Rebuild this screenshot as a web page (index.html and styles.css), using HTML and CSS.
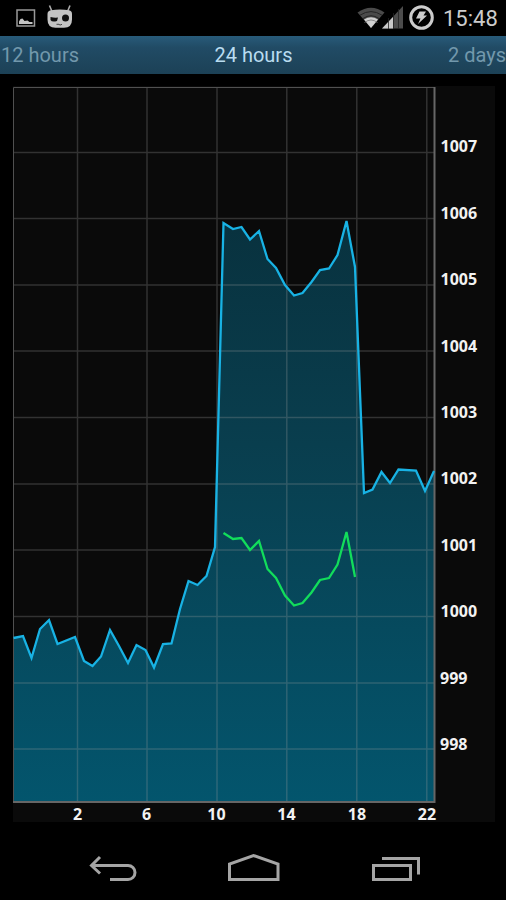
FILE: index.html
```html
<!doctype html>
<html lang="en">
    <head>
        <meta charset="utf-8">
        <meta name="viewport" content="width=device-width, initial-scale=1">
        <title>Barometer - 24 hours</title>
        <link rel="stylesheet" href="styles.css">
    </head>
    <body>
        <header class="status-bar">
            <svg class="status-left" width="80" height="36" viewBox="0 0 80 36">
                <rect x="17" y="10" width="17.500" height="16" fill="none" stroke="#999" stroke-width="1.500"/>
                <path d="M19 24v-2.500l1.500-2.500 2-.5 2 2.500 3-.5 2 1.500h3v2z" fill="#c4c4c4"/>
                <path d="M49.500 5.500l2.500 6M70 5.500l-2.500 6" stroke="#aaa" stroke-width="1.600"/>
                <path d="M47.500 14Q47.500 11 51 10.300 60 8.500 69 10.300 72 11 72 14V19.500Q72 27.800 64 27.800H55.500Q47.500 27.800 47.500 19.500z" fill="#c4c4c4"/>
                <path d="M50.500 17q4 1 7.500 .5l-1 3.500q-5 1.500-6.500-1z" fill="#111"/>
                <circle cx="65.500" cy="18" r="3.500" fill="#111"/>
                <path d="M56.500 24.300h2.500l1 .8 2-.8" fill="none" stroke="#444"/>
            </svg>
            <svg class="status-right" width="78" height="36" viewBox="356 0 78 36">
                <path d="M357.500 12.500Q371 3 384.500 12.500L371 28z" fill="#4a4a4a"/>
                <path d="M360 15.200Q371 8 382 15.200M363 18.500Q371 13 379 18.500" fill="none" stroke="#242424"/>
                <path d="M364 19.500Q371 15 378 19.500L371 28z" fill="#d0d0d0"/>
                <path d="M364.500 22.500Q371 17.500 377.500 22.500" fill="none" stroke="#777" stroke-width=".8"/>
                <path d="M382 28.500L403 6v22.500z" fill="#4c4c4c"/>
                <path d="M382 28.500l11-11.500v11.500z" fill="#c8c8c8"/>
                <path d="M388.500 18v11M393.500 13v16M398.500 9v20" stroke="#222" stroke-width=".8"/>
                <circle cx="421.500" cy="17.500" r="10.800" fill="none" stroke="#ccc" stroke-width="3"/>
                <path d="M419.500 11.500h6.500l-2.500 4h3.500l-9 8.500 2.500-5.500H416z" fill="#ccc"/>
            </svg>
            <span class="clock">15:48</span>
        </header>

        <nav class="periods">
            <span class="period">12 hours</span>
            <span class="period active">24 hours</span>
            <span class="period last">2 days</span>
        </nav>

        <main class="chart">
            <svg width="482" height="736" viewBox="13 86 482 736">
                <defs>
                    <linearGradient id="area" gradientUnits="userSpaceOnUse" x1="0" y1="86" x2="0" y2="802">
                        <stop offset="0" stop-color="#082a35"/>
                        <stop offset="0.500" stop-color="#093e4e"/>
                        <stop offset="1" stop-color="#03556d"/>
                    </linearGradient>
                </defs>
                <path class="fill" d="M13.500 638L23 636 31.500 658 40 629 49 620 57.500 644 75 637 84 661 92.500 666 101 656.500 110 630 119 646 128 663 136.500 645 145.500 650 154 667.500 163 644 171.500 643.500 180 609 188.500 581 197.500 585 206.500 576 215 547 223.500 223 233 229 241.500 227 250 239.500 259 231 267.500 259 276 268 285 285 294 295.500 302.500 293 311.500 282 320 270 329 268.500 337.500 255 346.500 221 355 267 364 493 372.500 489.500 381.500 472 390 483 398.500 469.500 416 470.500 425 491 434 471V802H13.500z"/>
                <path class="grid" d="M77.500 87V802M147 87V802M217 87V802M286.800 87V802M356.800 87V802M426.800 87V802M13 152.500H434M13 218.500H434M13 285H434M13 351H434M13 417.500H434M13 484H434M13 550H434M13 616.500H434M13 683H434M13 749H434"/>
                <path class="frame" d="M13.500 802V87.500H434"/>
                <path class="axis" d="M13 802H434.500V87"/>
                <polyline class="line pressure" points="13.500,638 23,636 31.500,658 40,629 49,620 57.500,644 75,637 84,661 92.500,666 101,656.500 110,630 119,646 128,663 136.500,645 145.500,650 154,667.500 163,644 171.500,643.500 180,609 188.500,581 197.500,585 206.500,576 215,547 223.500,223 233,229 241.500,227 250,239.500 259,231 267.500,259 276,268 285,285 294,295.500 302.500,293 311.500,282 320,270 329,268.500 337.500,255 346.500,221 355,267 364,493 372.500,489.500 381.500,472 390,483 398.500,469.500 416,470.500 425,491 434,471"/>
                <polyline class="line trend" points="223.500,533 233,539 241.500,538 250,550 259,541 267.500,569 276,578 285,595.500 294,605.500 302.500,603 311.500,592.500 320,580 329,578 337.500,564.500 346.500,532 355,577"/>
                <g class="labels">
                    <text x="440.500" y="152">1007</text>
                    <text x="440.500" y="219">1006</text>
                    <text x="440.500" y="285">1005</text>
                    <text x="440.500" y="352">1004</text>
                    <text x="440.500" y="418">1003</text>
                    <text x="440.500" y="484">1002</text>
                    <text x="440.500" y="551">1001</text>
                    <text x="440.500" y="617">1000</text>
                    <text x="440" y="684">999</text>
                    <text x="440" y="750">998</text>
                </g>
                <g class="labels hours">
                    <text x="77.500" y="820">2</text>
                    <text x="146.500" y="820">6</text>
                    <text x="216.500" y="820">10</text>
                    <text x="286.500" y="820">14</text>
                    <text x="357" y="820">18</text>
                    <text x="427" y="820">22</text>
                </g>
            </svg>
        </main>

        <footer class="nav-bar">
            <svg width="48" height="30" viewBox="89 853 48 30">
                <path d="M100 857l-8.500 8.500 8.500 8M92 865.500h36a7 7 0 0 1 0 14h-18"/>
            </svg>
            <svg width="54" height="30" viewBox="227 853 54 30">
                <path d="M229.500 879.500v-15.500l24-8.500 24.500 8.500v15.500z"/>
            </svg>
            <svg width="50" height="30" viewBox="371 853 50 30">
                <path d="M373.500 865.500h37v14h-37zM382 858.500h36.500v16"/>
            </svg>
        </footer>
    </body>
</html>
```
FILE: styles.css
```css
body {
    margin: 0;
    height: 900px;
    display: flex;
    flex-direction: column;
    overflow: hidden;
    background-color: #000;
    font-family: Roboto, sans-serif;
}

svg {
    display: block;
    overflow: visible;
}

.status-bar {
    height: 36px;
    display: flex;
    align-items: center;
}

.status-right {
    margin-left: auto;
}

.clock {
    width: 63px;
    margin-left: 9px;
    color: #ccc;
    font-size: 22px;
    line-height: 38px;
    padding-top: 2px;
    box-sizing: border-box;
}

.periods {
    height: 38px;
    box-sizing: border-box;
    padding-left: 1px;
    display: grid;
    grid-template-columns: 1fr 1fr 1fr;
    line-height: 39px;
    font-size: 20px;
    background: linear-gradient(#285b7a, #214b65 30%, #1c4156);
}

.period {
    color: #7298ac;
    white-space: nowrap;
}

.period.active {
    color: #b9dcf0;
    text-align: center;
}

.period.last {
    text-align: right;
}

.chart {
    width: 482px;
    height: 736px;
    margin: 12px 0 0 13px;
    background-color: #0a0a0a;
}

.fill {
    fill: url(#area);
}

.grid {
    fill: none;
    stroke: rgba(160, 160, 160, 0.27);
    stroke-width: 1.5;
}

.frame {
    fill: none;
    stroke: #505050;
}

.axis {
    fill: none;
    stroke: #666;
    stroke-width: 2;
}

.line {
    fill: none;
    stroke-width: 2.3;
}

.pressure {
    stroke: #18b2e4;
}

.trend {
    stroke: #12dc5b;
}

.labels {
    fill: #f2f2f2;
    font-family: "Open Sans", sans-serif;
    font-size: 16px;
    font-weight: bold;
}

.hours {
    text-anchor: middle;
}

.nav-bar {
    height: 78px;
    box-sizing: border-box;
    padding: 31px 85px 0 89px;
    display: flex;
    justify-content: space-between;
    align-items: flex-start;
}

.nav-bar path {
    fill: none;
    stroke: #a5a5a5;
    stroke-width: 3;
}
```
